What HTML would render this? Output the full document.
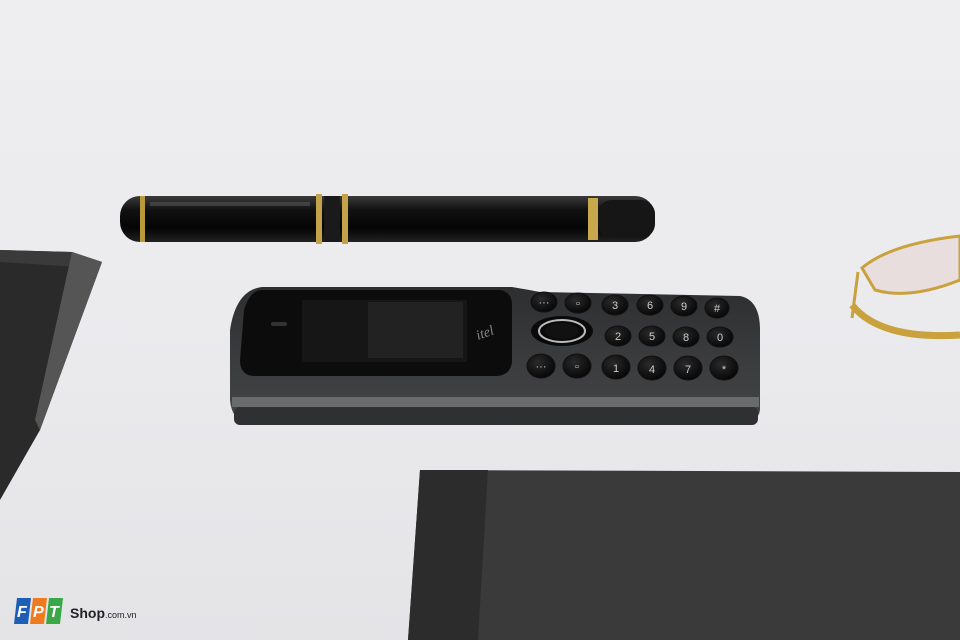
<!DOCTYPE html>
<html><head><style>
html,body{margin:0;padding:0;width:960px;height:640px;overflow:hidden;}
</style></head><body>
<svg width="960" height="640" viewBox="0 0 960 640" xmlns="http://www.w3.org/2000/svg">
<defs>
<linearGradient id="bg" x1="0" y1="0" x2="0" y2="1">
<stop offset="0" stop-color="#eeeef0"/><stop offset="0.5" stop-color="#ebebee"/><stop offset="1" stop-color="#e4e4e7"/>
</linearGradient>
<linearGradient id="pen" x1="0" y1="0" x2="0" y2="1">
<stop offset="0" stop-color="#3a3a3a"/><stop offset="0.3" stop-color="#111"/><stop offset="0.7" stop-color="#050505"/><stop offset="1" stop-color="#222"/>
</linearGradient>
<linearGradient id="ph" x1="0" y1="0" x2="0" y2="1">
<stop offset="0" stop-color="#2d2e30"/><stop offset="0.5" stop-color="#3a3b3d"/><stop offset="1" stop-color="#444547"/>
</linearGradient>
<radialGradient id="key" cx="0.4" cy="0.35" r="0.7">
<stop offset="0" stop-color="#2a2a2a"/><stop offset="1" stop-color="#050505"/>
</radialGradient>
</defs>
<rect width="960" height="640" fill="url(#bg)"/>
<!-- left notebook -->
<polygon points="0,250 72,252 102,262 40,430 0,500" fill="#2a2a2b"/>
<polygon points="0,250 72,252 102,262 95,268 0,262" fill="#3a3a3b"/>
<polygon points="72,252 102,262 40,430 35,420" fill="#555"/>
<!-- bottom right box -->
<polygon points="420,470 960,472 960,640 408,640" fill="#3a3a3b"/>
<polygon points="420,470 488,470 478,640 408,640" fill="#2c2c2d"/>
<!-- pen -->
<rect x="120" y="196" width="535" height="46" rx="20" fill="url(#pen)"/>
<rect x="140" y="196" width="5" height="46" fill="#b99a3a"/>
<rect x="316" y="194" width="6" height="50" fill="#c4a24a"/>
<rect x="324" y="196" width="16" height="46" fill="#1a1a1a"/>
<rect x="342" y="194" width="6" height="50" fill="#c4a24a"/>
<rect x="588" y="198" width="10" height="42" fill="#c9a84d"/>
<rect x="598" y="200" width="57" height="38" rx="14" fill="#161616"/>
<rect x="150" y="202" width="160" height="4" fill="#555" opacity="0.6"/>
<!-- glasses -->
<path d="M862 268 Q890 244 960 236 L960 280 Q910 300 875 290 Z" fill="#e8dede" stroke="#c9a23e" stroke-width="3"/>
<path d="M852 305 Q880 340 960 335" stroke="#c9a23e" stroke-width="7" fill="none"/>
<path d="M858 272 L852 318" stroke="#c9a23e" stroke-width="3" fill="none"/>
<!-- phone -->
<path d="M262 287 L512 287 Q530 290 540 292 L740 296 Q760 300 760 330 L760 410 Q758 425 735 425 L255 425 Q232 424 230 400 L230 330 Q236 290 262 287 Z" fill="url(#ph)"/>
<rect x="232" y="397" width="527" height="10" fill="#6a6b6d"/>
<rect x="234" y="407" width="524" height="18" rx="6" fill="#2f3032"/>
<path d="M262 290 L500 290 Q512 292 512 305 L512 362 Q510 376 495 376 L255 376 Q240 376 240 360 L244 310 Q250 290 262 290 Z" fill="#0c0c0d"/>
<rect x="302" y="300" width="165" height="62" fill="#161617"/>
<rect x="368" y="302" width="95" height="56" fill="#222223"/>
<rect x="271" y="322" width="16" height="4" rx="2" fill="#333"/>
<text x="478" y="340" font-family="Liberation Serif,serif" font-style="italic" font-size="14" fill="#888" transform="rotate(-20 478 340)">itel</text>
<!-- nav -->
<ellipse cx="562" cy="331" rx="31" ry="15" fill="#0a0a0a"/>
<ellipse cx="562" cy="331" rx="23" ry="11" fill="none" stroke="#bbb" stroke-width="2"/>
<ellipse cx="562" cy="331" rx="17" ry="8" fill="#111"/>
<g fill="url(#key)" stroke="#111">
<ellipse cx="544" cy="302" rx="13" ry="10"/><ellipse cx="578" cy="303" rx="13" ry="10"/><ellipse cx="615" cy="305" rx="13" ry="10"/><ellipse cx="650" cy="305" rx="13" ry="10"/><ellipse cx="684" cy="306" rx="13" ry="10"/><ellipse cx="717" cy="308" rx="12" ry="10"/>
<ellipse cx="618" cy="336" rx="13" ry="10"/><ellipse cx="652" cy="336" rx="13" ry="10"/><ellipse cx="686" cy="337" rx="13" ry="10"/><ellipse cx="720" cy="337" rx="13" ry="10"/>
<ellipse cx="541" cy="366" rx="14" ry="12"/><ellipse cx="577" cy="366" rx="14" ry="12"/><ellipse cx="616" cy="367" rx="14" ry="12"/><ellipse cx="652" cy="368" rx="14" ry="12"/><ellipse cx="688" cy="368" rx="14" ry="12"/><ellipse cx="724" cy="368" rx="14" ry="12"/>
</g>
<g font-family="Liberation Sans,sans-serif" font-size="11" fill="#ccc" text-anchor="middle">
<text x="544" y="306">···</text><text x="578" y="307">▫</text><text x="615" y="309">3</text><text x="650" y="309">6</text><text x="684" y="310">9</text><text x="717" y="312">#</text>
<text x="618" y="340">2</text><text x="652" y="340">5</text><text x="686" y="341">8</text><text x="720" y="341">0</text>
<text x="541" y="370">···</text><text x="577" y="370">▫</text><text x="616" y="372">1</text><text x="652" y="373">4</text><text x="688" y="373">7</text><text x="724" y="373">*</text>
</g>
<!-- logo -->
<g transform="translate(14,598)">
<path d="M3 0 H17 L14 26 H0 Z" fill="#1d5fb5"/>
<path d="M19 0 H33 L30 26 H16 Z" fill="#f07a1e"/>
<path d="M35 0 H49 L46 26 H32 Z" fill="#3aa847"/>
<text x="3" y="19" font-family="Liberation Sans,sans-serif" font-weight="bold" font-style="italic" font-size="16" fill="#fff">F</text>
<text x="19" y="19" font-family="Liberation Sans,sans-serif" font-weight="bold" font-style="italic" font-size="16" fill="#fff">P</text>
<text x="35" y="19" font-family="Liberation Sans,sans-serif" font-weight="bold" font-style="italic" font-size="16" fill="#fff">T</text>
<text x="56" y="20" font-family="Liberation Sans,sans-serif" font-weight="bold" font-size="14" fill="#222">Shop<tspan font-size="9" font-weight="normal">.com.vn</tspan></text>
</g>
</svg>
</body></html>
